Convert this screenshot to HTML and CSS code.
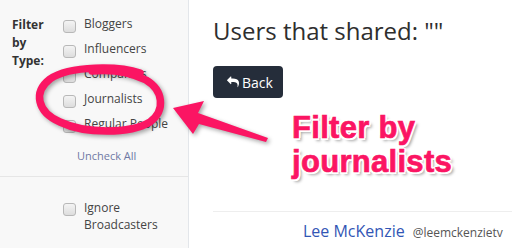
FILE: index.html
```html
<!DOCTYPE html>
<html>
<head>
<meta charset="utf-8">
<link rel="stylesheet" href="styles.css">
</head>
<body>
<aside class="sidebar">
  <div class="filter">
    <div class="filter-label">Filter<br>by<br>Type:</div>
    <div class="filter-options">
      <label class="opt"><input type="checkbox"><span>Bloggers</span></label>
      <label class="opt"><input type="checkbox"><span>Influencers</span></label>
      <label class="opt"><input type="checkbox"><span>Companies</span></label>
      <label class="opt"><input type="checkbox"><span>Journalists</span></label>
      <label class="opt"><input type="checkbox"><span>Regular People</span></label>
      <a class="uncheck">Uncheck All</a>
    </div>
  </div>
  <div class="ignore">
    <label class="opt"><input type="checkbox"><span>Ignore<br>Broadcasters</span></label>
  </div>
</aside>
<main class="main">
  <h1 class="title">Users that shared: ""</h1>
  <button class="back"><svg class="back-icon" viewBox="0 0 1792 1792"><path fill="#fff" d="M1792 1120q0 166-127 451-3 7-10.5 24t-13.5 30-13 22q-12 17-28 17-15 0-23.5-10t-8.5-25q0-9 2.5-26.5t2.5-23.5q5-68 5-123 0-101-17.5-181t-48.5-138.5-80-101-105.5-69.5-133-42.5-154-21.5-175.5-6h-224v256q0 26-19 45t-45 19-45-19l-512-512q-19-19-19-45t19-45l512-512q19-19 45-19t45 19 19 45v256h224q713 0 875 403 53 134 53 333z"/></svg><span>Back</span></button>
  <div class="user-row"><span class="name">Lee McKenzie</span><span class="handle">@leemckenzietv</span></div>
</main>
<svg class="annot" viewBox="0 0 512 248" width="512" height="248">
  <path class="loop" d="M140 73 C120 66 70 65 50 79 C33 92 37 112 60 122 C85 134 130 134 150 122 C166 110 163 90 146 80 C130 72 112 69 92 71"/>
  <polygon class="arrow" points="173,108 204,101 198,113 268,138 266,142 199,124 193,134"/>
</svg>
<div class="callout">Filter by<br>journalists</div>
</body>
</html>
```
FILE: styles.css
```css
* { box-sizing: border-box; }
html, body { margin: 0; padding: 0; }
body {
  position: relative;
  display: flex;
  width: 512px;
  height: 248px;
  overflow: hidden;
  font-family: "Open Sans", "DejaVu Sans", sans-serif;
  background: #fff;
  color: #444;
}
.sidebar {
  width: 189px;
  flex: none;
  background: #f8f8f8;
  border-right: 1px solid #e3e6ea;
}
.filter {
  display: flex;
  padding: 15px 0 13px 12px;
  border-bottom: 1px solid #e6e6e6;
}
.filter-label {
  width: 51px;
  font-size: 12px;
  line-height: 18px;
  font-weight: bold;
  color: #333;
  padding-top: 1px;
}
.filter-options {
  display: flex;
  flex-direction: column;
}
.opt {
  display: flex;
  align-items: flex-start;
  height: 25px;
  font-size: 12px;
  line-height: 17px;
  color: #444;
}
.opt input {
  appearance: none;
  -webkit-appearance: none;
  margin: 5px 8px 0 0;
  width: 13px;
  height: 13px;
  border: 1px solid #b8b8b8;
  border-radius: 3px;
  background: linear-gradient(#f4f4f4, #dddddd);
  flex: none;
}
.uncheck {
  margin: 8px 0 0 14px;
  font-size: 11px;
  line-height: 15px;
  color: #6f78a4;
}
.ignore {
  padding: 22px 0 0 63px;
}
.ignore .opt { height: auto; }
.ignore .opt input { margin-top: 4px; }
.main {
  flex: 1;
  padding-left: 24px;
}
.title {
  margin: 15px 0 0;
  font-size: 24px;
  line-height: 32px;
  font-weight: normal;
  color: #2e2e2e;
}
.back {
  margin-top: 19px;
  display: flex;
  align-items: center;
  gap: 3px;
  width: 70px;
  height: 32px;
  padding: 0 0 0 14px;
  border: none;
  border-radius: 4px;
  background: #252d3a;
  color: #fff;
  font-family: "Open Sans", sans-serif;
  font-size: 14px;
}
.back-icon { width: 12px; height: 12px; }
.user-row {
  margin-top: 113px;
  border-top: 1px solid #eeeeee;
  padding: 8px 0 0 90px;
  display: flex;
  align-items: baseline;
  gap: 8px;
}
.name {
  font-size: 16px;
  line-height: 22px;
  color: #3256b5;
}
.handle {
  font-size: 12px;
  color: #555;
}
.annot {
  position: absolute;
  left: 0;
  top: 0;
  pointer-events: none;
  filter: drop-shadow(2px 2px 2px rgba(0,0,0,0.35));
}
.loop {
  fill: none;
  stroke: #fb1563;
  stroke-width: 7.5;
  stroke-linecap: round;
}
.arrow { fill: #fb1563; }
.callout {
  position: absolute;
  left: 292px;
  top: 111px;
  font-family: "Liberation Sans", Arial, sans-serif;
  font-weight: bold;
  font-size: 31px;
  line-height: 34px;
  letter-spacing: 0.3px;
  color: #fb1563;
  -webkit-text-stroke: 0.7px #fb1563;
  text-shadow:
    -1.5px -1.5px 0 #fff, 1.5px -1.5px 0 #fff, -1.5px 1.5px 0 #fff, 1.5px 1.5px 0 #fff,
    0 -2px 0 #fff, 0 2px 0 #fff, -2px 0 0 #fff, 2px 0 0 #fff,
    3px 3px 3px rgba(0,0,0,0.35);
}
```
